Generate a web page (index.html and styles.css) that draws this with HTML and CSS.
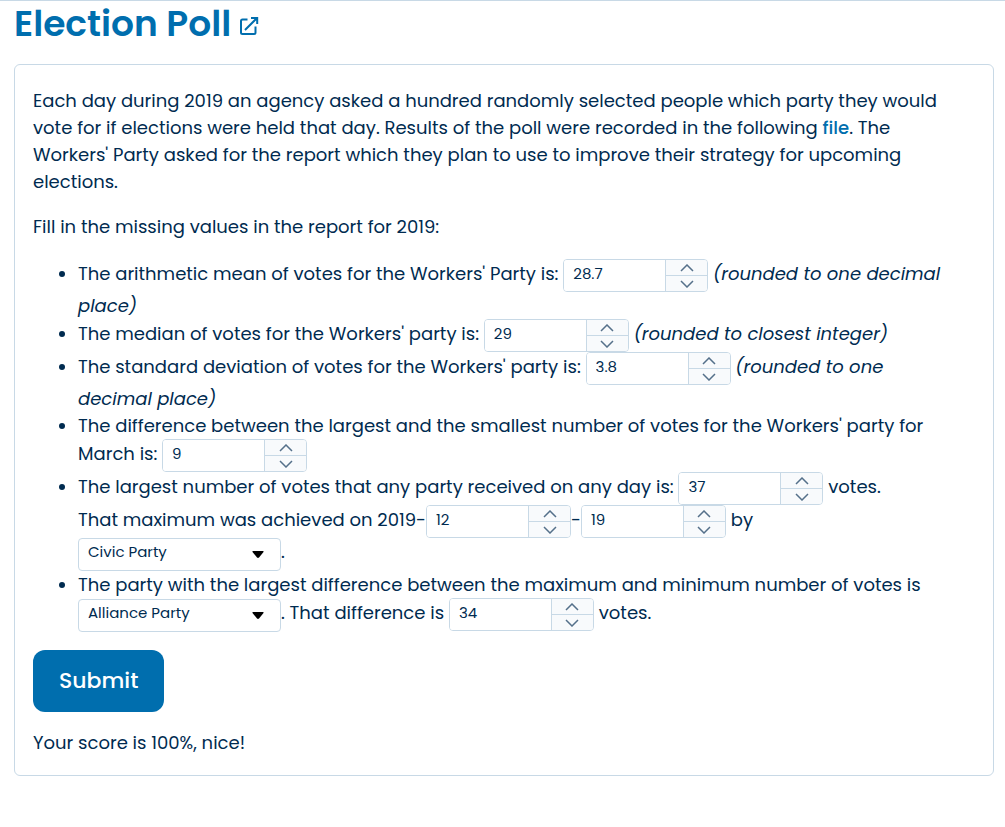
FILE: index.html
```html
<!DOCTYPE html>
<html lang="en">
<head>
<meta charset="utf-8">
<meta name="viewport" content="width=device-width, initial-scale=1">
<title>Election Poll</title>
<link rel="stylesheet" href="styles.css">
</head>
<body>
<svg class="symbols" aria-hidden="true">
  <symbol id="up" viewBox="0 0 14 8"><path d="M1 7 7 1l6 6"/></symbol>
  <symbol id="down" viewBox="0 0 14 8"><path d="M1 1 7 7l6-6"/></symbol>
</svg>
<main class="page">
  <h1 class="title">Election Poll
    <a class="title-link" href="#" aria-label="Open in new window"><svg class="title-icon" viewBox="0 0 20 20"><path d="M8.500 3.500H3.500Q2 3.500 2 5v11.500Q2 18 3.500 18H15q1.500 0 1.500-1.500V10.500M6 14 18 2M12 2H18.200v6"/></svg></a>
  </h1>
  <form class="card">
    <p class="text">Each day during 2019 an agency asked a hundred randomly selected people which party they would<br>vote for if elections were held that day. Results of the poll were recorded in the following <a class="link" href="#">file</a>. The<br>Workers' Party asked for the report which they plan to use to improve their strategy for upcoming<br>elections.</p>
    <p class="text">Fill in the missing values in the report for 2019:</p>
    <ul class="list">
      <li><label for="mean">The arithmetic mean of votes for the Workers' Party is:</label> <span class="number"><input id="mean" type="number" step="0.1" value="28.7"><span class="steps"><button type="button" aria-label="Increase"><svg><use href="#up"/></svg></button><button type="button" aria-label="Decrease"><svg><use href="#down"/></svg></button></span></span> <em>(rounded to one decimal<br>place)</em></li>
      <li><label for="median">The median of votes for the Workers' party is:</label> <span class="number"><input id="median" type="number" value="29"><span class="steps"><button type="button" aria-label="Increase"><svg><use href="#up"/></svg></button><button type="button" aria-label="Decrease"><svg><use href="#down"/></svg></button></span></span> <em>(rounded to closest integer)</em></li>
      <li><label for="deviation">The standard deviation of votes for the Workers' party is:</label> <span class="number"><input id="deviation" type="number" step="0.1" value="3.8"><span class="steps"><button type="button" aria-label="Increase"><svg><use href="#up"/></svg></button><button type="button" aria-label="Decrease"><svg><use href="#down"/></svg></button></span></span> <em>(rounded to one<br>decimal place)</em></li>
      <li><label for="march">The difference between the largest and the smallest number of votes for the Workers' party for<br>March is:</label> <span class="number"><input id="march" type="number" value="9"><span class="steps"><button type="button" aria-label="Increase"><svg><use href="#up"/></svg></button><button type="button" aria-label="Decrease"><svg><use href="#down"/></svg></button></span></span></li>
      <li><label for="largest">The largest number of votes that any party received on any day is:</label> <span class="number"><input id="largest" type="number" value="37"><span class="steps"><button type="button" aria-label="Increase"><svg><use href="#up"/></svg></button><button type="button" aria-label="Decrease"><svg><use href="#down"/></svg></button></span></span> votes.<br><label for="month">That maximum was achieved on 2019-</label><span class="number"><input id="month" type="number" value="12"><span class="steps"><button type="button" aria-label="Increase"><svg><use href="#up"/></svg></button><button type="button" aria-label="Decrease"><svg><use href="#down"/></svg></button></span></span><label for="day">-</label><span class="number"><input id="day" type="number" value="19"><span class="steps"><button type="button" aria-label="Increase"><svg><use href="#up"/></svg></button><button type="button" aria-label="Decrease"><svg><use href="#down"/></svg></button></span></span> <label for="winner">by</label><br><select class="select" id="winner"><option>Civic Party</option><option>Alliance Party</option></select>.</li>
      <li><label for="spread-party">The party with the largest difference between the maximum and minimum number of votes is</label><br><select class="select" id="spread-party"><option>Alliance Party</option><option>Civic Party</option></select>. <label for="spread">That difference is</label> <span class="number"><input id="spread" type="number" value="34"><span class="steps"><button type="button" aria-label="Increase"><svg><use href="#up"/></svg></button><button type="button" aria-label="Decrease"><svg><use href="#down"/></svg></button></span></span> votes.</li>
    </ul>
    <button class="submit" type="button">Submit</button>
    <p class="score">Your score is 100%, nice!</p>
  </form>
</main>
</body>
</html>
```

FILE: styles.css
```css
* { box-sizing: border-box; }
body {
  margin: 0;
  border-top: 1px solid #c8d9e6;
  background: #fff;
  color: #002b50;
  font: 18px/27px Poppins, Inter, sans-serif;
}
.symbols { display: none; }
.page { padding: 0 11px 52px 14px; }
.title {
  display: flex;
  align-items: center;
  gap: 8px;
  margin: 0 0 18px;
  color: #006eae;
  font-size: 36px;
  font-weight: 600;
  line-height: 45px;
}
.title-link { display: flex; padding-top: 5px; }
.title-icon {
  width: 20px;
  height: 20px;
  fill: none;
  stroke: #006eae;
  stroke-width: 2;
}
.card {
  padding: 22px 18px 19px;
  border: 1px solid #c8d9e6;
  border-radius: 6px;
}
.text { margin: 0 0 18px; }
.link { color: #006eae; font-weight: 500; text-decoration: none; }
.list { margin: 0 0 18px; padding: 1px 0 0 45px; }
.number {
  display: inline-flex;
  width: 145px;
  height: 33px;
  overflow: hidden;
  border: 1px solid #c8d9e6;
  border-radius: 4px;
  vertical-align: 1px;
}
.number input {
  flex: 1;
  min-width: 0;
  padding: 0 9px 3px;
  border: 0;
  background: #fff;
  color: #002b50;
  font: 15px/20px Poppins, Inter, sans-serif;
  appearance: textfield;
}
.number input::-webkit-inner-spin-button { appearance: none; margin: 0; }
.steps {
  display: flex;
  flex-direction: column;
  width: 42px;
  border-left: 1px solid #c8d9e6;
}
.steps button {
  display: flex;
  height: 15px;
  align-items: center;
  justify-content: center;
  padding: 0;
  border: 0;
  background: #f8fafc;
}
.steps button + button { flex: 1; border-top: 1px solid #c8d9e6; }
.steps svg {
  width: 14px;
  height: 8px;
  fill: none;
  stroke: #55708a;
  stroke-width: 1.5;
}
.select {
  width: 203px;
  height: 33px;
  padding: 0 9px 5px;
  border: 1px solid #c8d9e6;
  border-radius: 4px;
  background: #fff url("data:image/svg+xml,%3Csvg xmlns='http://www.w3.org/2000/svg' width='12' height='7'%3E%3Cpath d='M1 0h10q1 0 .5 1L7 6.500q-1 .8-2 0L.5 1Q0 0 1 0'/%3E%3C/svg%3E") no-repeat right 16px top 12px;
  color: #002b50;
  font: 15px/20px Poppins, Inter, sans-serif;
  appearance: none;
  vertical-align: 1px;
}
.submit {
  display: block;
  padding: 15px 26px;
  border: 0;
  border-radius: 12px;
  background: #006eae;
  color: #fff;
  font: 500 22px/32px Poppins, Inter, sans-serif;
}
.score { margin: 17px 0 0; }
```
